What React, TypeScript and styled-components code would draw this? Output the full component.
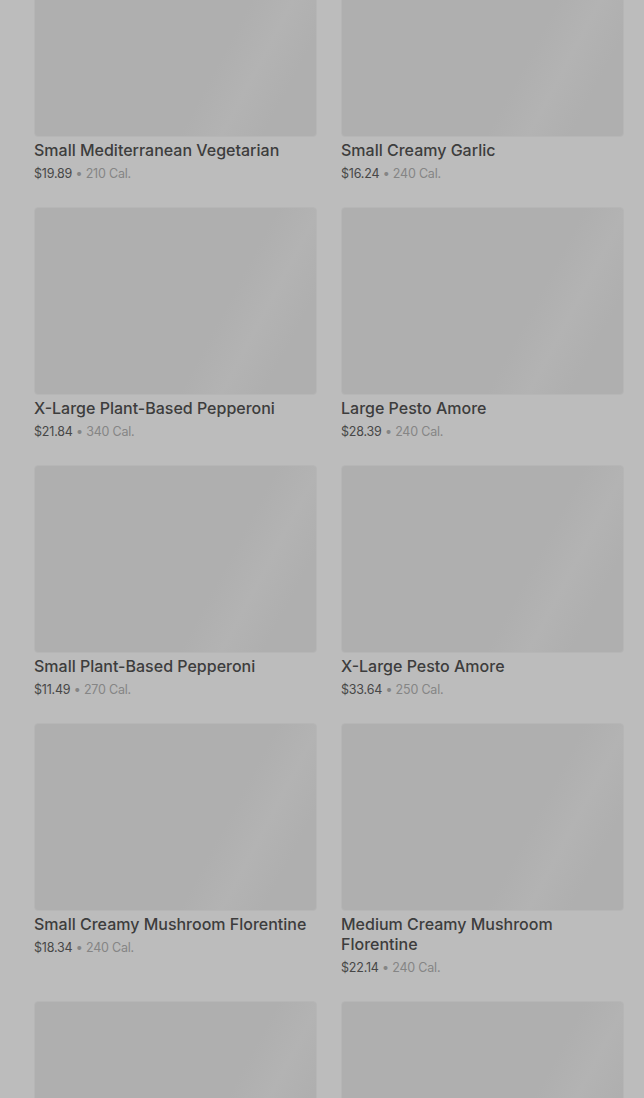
import React from "react";
import styled, { createGlobalStyle } from "styled-components";

const Global = createGlobalStyle`
  html, body { margin: 0; padding: 0; background: #bcbcbc; }
  body { font-family: Inter, "Noto Sans", sans-serif; overflow: hidden; }
`;

const Viewport = styled.div`
  height: 1098px;
  overflow: hidden;
  background: #bcbcbc;
`;

const Grid = styled.div`
  display: grid;
  grid-template-columns: 283px 283px;
  column-gap: 24px;
  row-gap: 24px;
  padding: 0 20px 0 34px;
  margin-top: -51px;
`;

const Card = styled.div`
  display: flex;
  flex-direction: column;
`;

const Thumb = styled.div`
  height: 188px;
  border-radius: 4px;
  box-sizing: border-box;
  border: 1px solid #b6b6b6;
  background: linear-gradient(
    118deg,
    #afafaf 0%,
    #afafaf 64%,
    #b3b3b3 75%,
    #afafaf 86%,
    #afafaf 100%
  );
`;

const Info = styled.div`
  padding-top: 3px;
  display: flex;
  flex-direction: column;
  gap: 5px;
`;

const Title = styled.div`
  font-size: 16px;
  line-height: 20px;
  font-weight: 500;
  color: #3d3d3d;
`;

const Meta = styled.div`
  font-size: 12.5px;
  line-height: 18px;
  color: #474747;
  letter-spacing: -0.2px;
`;

const Cal = styled.span`
  color: #858585;
`;

const items = [
  ["Small Mediterranean Vegetarian", "$19.89", "210 Cal."],
  ["Small Creamy Garlic", "$16.24", "240 Cal."],
  ["X-Large Plant-Based Pepperoni", "$21.84", "340 Cal."],
  ["Large Pesto Amore", "$28.39", "240 Cal."],
  ["Small Plant-Based Pepperoni", "$11.49", "270 Cal."],
  ["X-Large Pesto Amore", "$33.64", "250 Cal."],
  ["Small Creamy Mushroom Florentine", "$18.34", "240 Cal."],
  ["Medium Creamy Mushroom Florentine", "$22.14", "240 Cal."],
  ["", "", ""],
  ["", "", ""],
];

export default function App() {
  return (
    <Viewport>
      <Global />
      <Grid>
        {items.map(([t, p, c], i) => (
          <Card key={i}>
            <Thumb />
            {t && (
              <Info>
                <Title>{t}</Title>
                <Meta>
                  {p} <Cal>• {c}</Cal>
                </Meta>
              </Info>
            )}
          </Card>
        ))}
      </Grid>
    </Viewport>
  );
}
